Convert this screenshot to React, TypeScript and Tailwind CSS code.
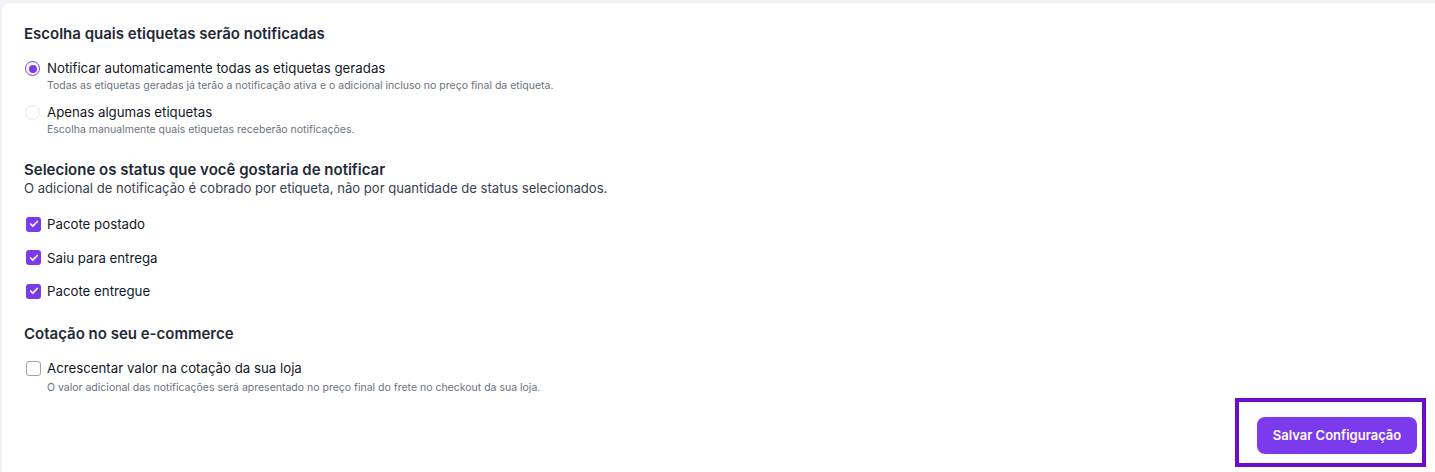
import { Check } from "lucide-react";

function Radio({ checked }: { checked: boolean }) {
  return (
    <span
      className={`flex h-[15px] w-[15px] flex-none items-center justify-center rounded-full border ${
        checked ? "border-[#7c3aed]" : "border-[#e5e7eb]"
      }`}
    >
      {checked && <span className="h-[8px] w-[8px] rounded-full bg-[#7c3aed]" />}
    </span>
  );
}

function Box({ checked }: { checked: boolean }) {
  return checked ? (
    <span className="flex h-[15px] w-[15px] flex-none items-center justify-center rounded-[3px] bg-[#7c3aed]">
      <Check className="h-[10px] w-[10px] text-white" strokeWidth={4} />
    </span>
  ) : (
    <span className="block h-[15px] w-[15px] flex-none rounded-[3px] border border-[#9ca3af] bg-white" />
  );
}

const statuses = ["Pacote postado", "Saiu para entrega", "Pacote entregue"];

export default function App() {
  return (
    <div className="h-[472px] overflow-hidden bg-[#f1f3f6] pl-[2px] pt-[3px] font-['Inter',sans-serif] text-[#111827]">
      <div className="h-full rounded-tl-lg bg-white pt-[21px]">
        <div className="px-[22px]">
          <h2 className="text-[15px] font-semibold leading-5 text-[#1f2937]">
            Escolha quais etiquetas serão notificadas
          </h2>

          <div className="mt-[14px] flex flex-col gap-[8px]">
            <div className="flex items-start gap-[7px]">
              <span className="mt-[3px] block pl-[1px]">
                <Radio checked />
              </span>
              <div>
                <p className="text-[13.25px] leading-5">Notificar automaticamente todas as etiquetas geradas</p>
                <p className="text-[10.5px] leading-4 text-[#6b7280]">
                  Todas as etiquetas geradas já terão a notificação ativa e o adicional incluso no preço final da etiqueta.
                </p>
              </div>
            </div>
            <div className="flex items-start gap-[7px]">
              <span className="mt-[3px] block pl-[1px]">
                <Radio checked={false} />
              </span>
              <div>
                <p className="text-[13.25px] leading-5">Apenas algumas etiquetas</p>
                <p className="text-[10.5px] leading-4 text-[#6b7280]">
                  Escolha manualmente quais etiquetas receberão notificações.
                </p>
              </div>
            </div>
          </div>

          <h2 className="mt-[22px] text-[15px] font-semibold leading-5 text-[#1f2937]">
            Selecione os status que você gostaria de notificar
          </h2>
          <p className="-mt-[2px] text-[13.1px] leading-5 text-[#374151]">
            O adicional de notificação é cobrado por etiqueta, não por quantidade de status selecionados.
          </p>

          <div className="mt-[16px] flex flex-col gap-[13.5px]">
            {statuses.map((s) => (
              <label key={s} className="flex items-center gap-[6px] pl-[2px]">
                <Box checked />
                <span className="text-[13.25px] leading-5">{s}</span>
              </label>
            ))}
          </div>

          <h2 className="mt-[23px] text-[15px] font-semibold leading-5 text-[#1f2937]">Cotação no seu e-commerce</h2>

          <div className="mt-[14px] flex items-start gap-[6px] pl-[2px]">
            <span className="mt-[3px] block">
              <Box checked={false} />
            </span>
            <div>
              <p className="text-[13.25px] leading-5">Acrescentar valor na cotação da sua loja</p>
              <p className="mt-[2px] text-[10.5px] leading-4 text-[#6b7280]">
                O valor adicional das notificações será apresentado no preço final do frete no checkout da sua loja.
              </p>
            </div>
          </div>
        </div>

        <div className="mt-[2px] flex justify-end pr-[9px]">
          <div className="border-4 border-[#6a0dcc] pb-[9px] pl-[18px] pr-[5px] pt-[15px]">
            <button
              type="button"
              className="h-[37px] w-[160px] rounded-lg bg-[#7c3aed] text-[13px] font-semibold text-white"
            >
              Salvar Configuração
            </button>
          </div>
        </div>
      </div>
    </div>
  );
}
